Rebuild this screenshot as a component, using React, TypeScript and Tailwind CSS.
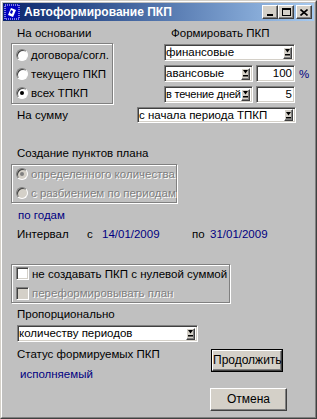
import React from 'react';

const sunken =
  'border border-t-[#808080] border-l-[#808080] border-r-white border-b-white shadow-[inset_1px_1px_0_#404040,inset_-1px_-1px_0_#d4d0c8]';
const raised =
  'bg-[#d4d0c8] border border-t-white border-l-white border-r-[#404040] border-b-[#404040] shadow-[inset_-1px_-1px_0_#808080]';
const etched = 'border border-[#808080] shadow-[inset_1px_1px_0_#fff,1px_1px_0_#fff]';

const DropArrow: React.FC = () => (
  <div className={`${raised} w-[9px] h-[12px] flex items-center justify-center shrink-0`}>
    <svg width="5" height="7" viewBox="0 0 5 7">
      <path d="M0 0h5L2.5 3.5z" fill="#000" />
      <rect x="0" y="5" width="5" height="1.5" fill="#000" />
    </svg>
  </div>
);

const Select: React.FC<{ value: string; className: string; textClass?: string }> = ({ value, className, textClass = '' }) => (
  <div className={`${sunken} bg-white flex items-center pl-[1px] pr-[2px] ${className}`}>
    <span className={`flex-1 whitespace-nowrap overflow-hidden leading-[13px] ${textClass}`}>{value}</span>
    <DropArrow />
  </div>
);

const Radio: React.FC<{ checked?: boolean; disabled?: boolean }> = ({ checked, disabled }) => (
  <div
    className={`w-[12px] h-[12px] rounded-full shrink-0 flex items-center justify-center border border-t-[#808080] border-l-[#808080] border-r-white border-b-white ${
      disabled ? 'bg-[#d4d0c8]' : 'bg-white'
    } shadow-[inset_1px_1px_0_#404040]`}
  >
    {checked && <div className={`w-[4px] h-[4px] rounded-full ${disabled ? 'bg-[#808080]' : 'bg-black'}`} />}
  </div>
);

const Check: React.FC<{ disabled?: boolean }> = ({ disabled }) => (
  <div className={`w-[13px] h-[13px] shrink-0 ${sunken} ${disabled ? 'bg-[#d4d0c8]' : 'bg-white'}`} />
);

const dis = 'text-[#808080] [text-shadow:1px_1px_0_#fff]';

export default function App() {
  return (
    <div className="w-[317px] h-[419px] bg-[#c0c0c0] text-[11.5px] whitespace-nowrap text-black font-['Liberation_Sans',Arial,sans-serif] border border-t-[#d4d0c8] border-l-[#d4d0c8] border-r-[#404040] border-b-[#404040]">
      <div className="h-full border border-t-white border-l-white border-r-[#808080] border-b-[#808080] p-[1px] flex flex-col">
        {/* title bar */}
        <div className="h-[18px] bg-gradient-to-r from-[#0a246a] to-[#a6caf0] flex items-center pl-[1px] pr-[2px]">
          <svg width="16" height="16" viewBox="0 0 16 16" className="shrink-0">
            <rect width="16" height="16" fill="#0000c0" />
            <rect x="1" y="1" width="14" height="14" fill="none" stroke="#fff" strokeWidth="1" strokeDasharray="1 1" />
            <path d="M4 11l3-7 5 2-3 7z" fill="#fff" />
            <path d="M6 9l1-3 2 1-1 3z" fill="#0000c0" />
          </svg>
          <span className="ml-[4px] text-white font-bold text-[12px] leading-[18px] flex-1">Автоформирование ПКП</span>
          <div className={`${raised} w-[16px] h-[14px] flex items-end justify-center pb-[2px]`}>
            <div className="w-[6px] h-[2px] bg-black" />
          </div>
          <div className={`${raised} w-[16px] h-[14px] flex items-center justify-center`}>
            <div className="w-[9px] h-[8px] border border-black border-t-2" />
          </div>
          <div className={`${raised} w-[16px] h-[14px] ml-[2px] flex items-center justify-center`}>
            <svg width="8" height="7" viewBox="0 0 8 7">
              <path d="M0.5 0.5L7.5 6.5M7.5 0.5L0.5 6.5" stroke="#000" strokeWidth="1.6" />
            </svg>
          </div>
        </div>

        {/* client */}
        <div className="flex-1 pt-[4px] mt-[1px] leading-[14px]">
          <div className="flex">
            <div className="ml-[8px] w-[102px] shrink-0">
              <div className="pl-[6px] h-[14px]">На основании</div>
              <div className={`${etched} mt-[3px] h-[61px] pt-[1px] pl-[4px]`}>
                <div className="h-[19px] flex items-center gap-[3px]">
                  <Radio />
                  <span>договора/согл.</span>
                </div>
                <div className="h-[19px] flex items-center gap-[3px]">
                  <Radio />
                  <span>текущего ПКП</span>
                </div>
                <div className="h-[19px] flex items-center gap-[3px]">
                  <Radio checked />
                  <span>всех ТПКП</span>
                </div>
              </div>
            </div>
            <div className="ml-[51px]">
              <div className="pl-[7px] h-[14px]">Формировать ПКП</div>
              <Select value="финансовые" className="mt-[4px] w-[131px] h-[17px]" />
              <div className="flex items-center mt-[4px]">
                <Select value="авансовые" className="w-[89px] h-[17px]" />
                <div className={`${sunken} bg-white ml-[3px] w-[39px] h-[17px] text-right pr-[2px] leading-[15px]`}>100</div>
                <span className="ml-[4px] text-[#000080]">%</span>
              </div>
              <div className="flex items-center mt-[4px]">
                <Select value="в течение дней" className="w-[89px] h-[17px]" textClass="text-[11px] tracking-[-0.2px]" />
                <div className={`${sunken} bg-white ml-[3px] w-[39px] h-[17px] text-right pr-[2px] leading-[15px]`}>5</div>
              </div>
            </div>
          </div>

          <div className="flex items-center mt-[3px] ml-[14px]">
            <div className="w-[120px]">На сумму</div>
            <Select value="с начала периода ТПКП" className="w-[159px] h-[16px]" />
          </div>

          <div className="mt-[23px] ml-[14px] h-[14px]">Создание пунктов плана</div>
          <div className={`${etched} mt-[4px] ml-[8px] w-[166px] h-[39px] pl-[4px] flex flex-col gap-[2px]`}>
            <div className="h-[18px] flex items-center gap-[3px]">
              <Radio checked disabled />
              <span className={dis}>определенного количества</span>
            </div>
            <div className="h-[18px] flex items-center gap-[3px]">
              <Radio disabled />
              <span className={dis}>с разбиением по периодам</span>
            </div>
          </div>

          <div className="mt-[5px] ml-[15px] h-[14px] text-[#000080]">по годам</div>
          <div className="mt-[5px] ml-[14px] h-[14px] flex">
            <span className="w-[70px]">Интервал</span>
            <span className="w-[15px]">с</span>
            <span className="w-[90px] text-[#000080]">14/01/2009</span>
            <span className="w-[18px]">по</span>
            <span className="text-[#000080]">31/01/2009</span>
          </div>

          <div className={`${etched} mt-[23px] ml-[8px] w-[219px] h-[39px] pl-[4px] flex flex-col gap-[2px]`}>
            <div className="h-[18px] flex items-center gap-[3px]">
              <Check />
              <span>не создавать ПКП с нулевой суммой</span>
            </div>
            <div className="h-[18px] flex items-center gap-[3px]">
              <Check disabled />
              <span className={dis}>переформировывать план</span>
            </div>
          </div>

          <div className="mt-[4px] ml-[14px] h-[14px]">Пропорционально</div>
          <Select value="количеству периодов" className="mt-[4px] ml-[14px] w-[181px] h-[17px]" />

          <div className="flex mt-[5px]">
            <div className="w-[207px] pl-[14px]">
              <div className="h-[14px]">Статус формируемых ПКП</div>
              <div className="mt-[6px] ml-[3px] h-[14px] text-[#000080]">исполняемый</div>
            </div>
            <div className="flex flex-col items-start">
              <div className="mt-[2px] ml-[1px] border border-black">
                <button className={`${raised} w-[70px] h-[21px] leading-[17px] text-[12px]`}>Продолжить</button>
              </div>
              <button className={`${raised} mt-[16px] w-[77px] h-[23px] leading-[19px] text-[12px]`}>Отмена</button>
            </div>
          </div>
        </div>
      </div>
    </div>
  );
}
